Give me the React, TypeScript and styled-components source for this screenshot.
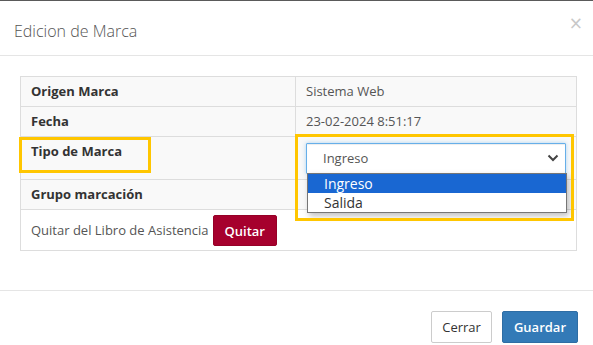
import React from "react";
import styled, { createGlobalStyle } from "styled-components";

const GlobalStyle = createGlobalStyle`
  html, body {
    margin: 0;
    padding: 0;
    background: #fff;
    font-family: "Open Sans", "Liberation Sans", sans-serif;
  }
`;

type Row = {
  label: string;
  value?: string;
  tall?: boolean;
};

const rows: Row[] = [
  { label: "Origen Marca", value: "Sistema Web" },
  { label: "Fecha", value: "23-02-2024 8:51:17" },
  { label: "Tipo de Marca", tall: true },
  { label: "Grupo marcación", value: "" },
];

const Modal = styled.div`
  width: 593px;
  height: 345px;
  border-top: 1px solid #5a5a5a;
  box-sizing: border-box;
  overflow: hidden;
  background: #fff;
`;

const Header = styled.div`
  display: flex;
  align-items: flex-start;
  justify-content: space-between;
  height: 54px;
  padding: 0 10px 0 14px;
  border-bottom: 1px solid #e5e5e5;
`;

const Title = styled.h4`
  margin: 18px 0 0;
  font-size: 16px;
  font-weight: 300;
  color: #555;
  line-height: 24px;
`;

const Close = styled.span`
  margin-top: 12px;
  font-size: 17px;
  color: #c8c8c8;
  font-family: "DejaVu Sans", sans-serif;
  line-height: 20px;
`;

const Body = styled.div`
  padding: 20px 16px 39px 20px;
`;

const TableWrap = styled.div`
  position: relative;
`;

const Table = styled.table`
  width: 100%;
  border-collapse: collapse;
  font-size: 13px;
  color: #555;
`;

const Tr = styled.tr<{ $striped?: boolean }>`
  background: ${(p) => (p.$striped ? "#f9f9f9" : "#fff")};
`;

const Th = styled.td<{ $tall?: boolean }>`
  width: 254px;
  border: 1px solid #ddd;
  padding: ${(p) => (p.$tall ? "6px 10px 0" : "6px 10px")};
  height: ${(p) => (p.$tall ? "36px" : "17px")};
  vertical-align: ${(p) => (p.$tall ? "top" : "middle")};
  font-weight: 700;
  color: #333;
  line-height: 17px;
`;

const Td = styled.td<{ $tall?: boolean }>`
  border: 1px solid #ddd;
  padding: ${(p) => (p.$tall ? "5px 10px 5px" : "6px 10px")};
  line-height: 17px;
  vertical-align: middle;
`;

const ActionCell = styled.td`
  border: 1px solid #ddd;
  padding: 5px 10px 4px;
  color: #555;
  line-height: 17px;
`;

const ActionRow = styled.div`
  display: flex;
  align-items: center;
  gap: 4px;
`;

const SelectBox = styled.div`
  display: flex;
  align-items: center;
  justify-content: space-between;
  height: 29px;
  border: 1px solid #66afe9;
  border-radius: 1px;
  padding: 0 6px 0 16px;
  box-shadow: inset 0 1px 1px rgba(0, 0, 0, 0.075), 0 0 4px rgba(102, 175, 233, 0.5);
  color: #555;
  font-size: 13px;
  background: #fff;
`;

const DropList = styled.ul`
  position: absolute;
  left: 287px;
  top: 97px;
  width: 258px;
  margin: 0;
  padding: 0;
  list-style: none;
  border: 1px solid #767676;
  background: #fff;
  box-shadow: 2px 3px 6px rgba(0, 0, 0, 0.25);
  font-size: 14px;
`;

const Option = styled.li<{ $active?: boolean }>`
  height: 19px;
  line-height: 19px;
  padding-left: 16px;
  background: ${(p) => (p.$active ? "#1967d2" : "#fff")};
  color: ${(p) => (p.$active ? "#fff" : "#333")};
`;

const Highlight = styled.div<{ $x: number; $y: number; $w: number; $h: number }>`
  position: absolute;
  left: ${(p) => p.$x}px;
  top: ${(p) => p.$y}px;
  width: ${(p) => p.$w}px;
  height: ${(p) => p.$h}px;
  border: 3px solid #ffc600;
  box-sizing: border-box;
  pointer-events: none;
`;

const Button = styled.button<{ $variant: "danger" | "primary" | "default" }>`
  font-family: "Open Sans", "Liberation Sans", sans-serif;
  font-size: 13px;
  font-weight: ${(p) => (p.$variant === "default" ? 400 : 600)};
  height: ${(p) => (p.$variant === "danger" ? "31px" : "32px")};
  padding: 0 ${(p) => (p.$variant === "default" ? "10px" : "11px")};
  border-radius: 2px;
  cursor: pointer;
  border: 1px solid
    ${(p) =>
      p.$variant === "danger" ? "#960027" : p.$variant === "primary" ? "#2e6da4" : "#ccc"};
  background: ${(p) =>
    p.$variant === "danger" ? "#a6002d" : p.$variant === "primary" ? "#337ab7" : "#fff"};
  color: ${(p) => (p.$variant === "default" ? "#333" : "#fff")};
`;

const Footer = styled.div`
  display: flex;
  justify-content: flex-end;
  gap: 10px;
  padding: 20px 15px;
  border-top: 1px solid #e5e5e5;
`;

const Chevron = () => (
  <svg width="12" height="8" viewBox="0 0 12 8">
    <path d="M1.5 1.5 L6 6 L10.5 1.5" fill="none" stroke="#444" strokeWidth="2" />
  </svg>
);

export default function App() {
  return (
    <>
      <GlobalStyle />
      <Modal>
        <Header>
          <Title>Edicion de Marca</Title>
          <Close>×</Close>
        </Header>
        <Body>
          <TableWrap>
            <Table>
              <tbody>
                {rows.map((r) => (
                  <Tr key={r.label} $striped>
                    <Th $tall={r.tall}>{r.label}</Th>
                    <Td $tall={r.tall}>
                      {r.tall ? (
                        <SelectBox>
                          <span>Ingreso</span>
                          <Chevron />
                        </SelectBox>
                      ) : (
                        r.value
                      )}
                    </Td>
                  </Tr>
                ))}
                <Tr>
                  <ActionCell colSpan={2}>
                    <ActionRow>
                      <span>Quitar del Libro de Asistencia</span>
                      <Button $variant="danger">Quitar</Button>
                    </ActionRow>
                  </ActionCell>
                </Tr>
              </tbody>
            </Table>
            <DropList>
              <Option $active>Ingreso</Option>
              <Option>Salida</Option>
            </DropList>
            <Highlight $x={-1} $y={61} $w={132} $h={36} />
            <Highlight $x={275} $y={58} $w={279} $h={87} />
          </TableWrap>
        </Body>
        <Footer>
          <Button $variant="default">Cerrar</Button>
          <Button $variant="primary">Guardar</Button>
        </Footer>
      </Modal>
    </>
  );
}
